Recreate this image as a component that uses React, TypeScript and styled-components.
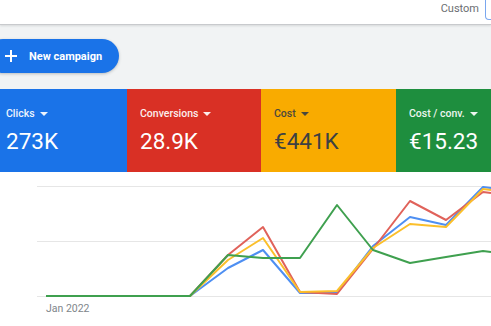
import React from 'react';
import styled, { createGlobalStyle } from 'styled-components';

const GlobalStyle = createGlobalStyle`
  html, body {
    margin: 0;
    padding: 0;
    background: #ffffff;
    overflow: hidden;
  }
  body {
    font-family: Roboto, 'Liberation Sans', Arial, sans-serif;
  }
`;

const Page = styled.div`
  width: 491px;
  height: 326px;
  overflow: hidden;
  display: flex;
  flex-direction: column;
  background: #ffffff;
`;

const TopBar = styled.header`
  height: 24px;
  flex: none;
  background: #ffffff;
  border-bottom: 1px solid #c8cacd;
  box-shadow: 0 1px 2px rgba(60, 64, 67, 0.15);
  display: flex;
  justify-content: flex-end;
  align-items: flex-start;
  gap: 6px;
  position: relative;
  z-index: 1;
`;

const RangeLabel = styled.span`
  font-size: 11px;
  color: #6b6e72;
  line-height: 16px;
  margin-top: 1px;
`;

const RangeBox = styled.div`
  width: 10px;
  height: 19px;
  margin-right: -6px;
  border: 1px solid #7aa7ef;
  border-top: none;
  border-radius: 0 0 0 4px;
  flex: none;
`;

const ActionArea = styled.div`
  height: 64px;
  flex: none;
  background: #f1f3f4;
  padding-top: 14px;
  box-sizing: border-box;
`;

const NewButton = styled.button`
  height: 34px;
  margin-left: -14px;
  padding: 0 17px 0 18px;
  border: none;
  border-radius: 17px;
  background: #1a73e8;
  color: #ffffff;
  font-family: inherit;
  font-size: 11px;
  font-weight: 700;
  display: flex;
  align-items: center;
  gap: 11px;
  box-shadow: 0 1px 3px rgba(60, 64, 67, 0.3);
  cursor: pointer;
`;

const CardRow = styled.div`
  display: flex;
  height: 83px;
  flex: none;
  margin-left: -7px;
`;

const Card = styled.div<{ $bg: string; $fg: string; $w?: number }>`
  width: ${({ $w }) => ($w ? `${$w}px` : 'auto')};
  flex: ${({ $w }) => ($w ? 'none' : '1')};
  background: ${({ $bg }) => $bg};
  color: ${({ $fg }) => $fg};
  padding: 17px 0 0 13px;
  box-sizing: border-box;
  display: flex;
  flex-direction: column;
  gap: 5px;
`;

const CardLabel = styled.div`
  font-size: 10.5px;
  font-weight: 500;
  line-height: 16px;
  display: flex;
  align-items: center;
  gap: 5px;
  opacity: 0.92;
`;

const Caret = styled.span`
  width: 0;
  height: 0;
  border-left: 4px solid transparent;
  border-right: 4px solid transparent;
  border-top: 4px solid currentColor;
`;

const CardValue = styled.div`
  font-size: 22.5px;
  line-height: 28px;
  font-weight: 400;
`;

const ChartArea = styled.div`
  flex: 1;
  background: #ffffff;
`;

const PlusIcon = () => (
  <svg width="14" height="14" viewBox="0 0 14 14">
    <path d="M7 1v12M1 7h12" stroke="#fff" strokeWidth="2" />
  </svg>
);

const xs = [46, 82, 119, 156, 190, 228, 263, 300, 337, 373, 410, 446, 483, 491];
const top = 173;

const series = [
  { color: '#4e8ff2', ys: [297, 297, 297, 297, 297, 269, 251, 294, 294, 247, 218, 226, 188, 189] },
  { color: '#e0625a', ys: [297, 297, 297, 297, 297, 256, 228, 293, 295, 250, 202, 221, 193, 194] },
  { color: '#fbbf2b', ys: [297, 297, 297, 297, 297, 261, 239, 293, 292, 249, 225, 228, 190, 191] },
  { color: '#3fa04f', ys: [297, 297, 297, 297, 297, 256, 259, 259, 206, 251, 264, 258, 252, 253] },
];

const pts = (ys: number[]) => xs.map((x, i) => `${x},${ys[i] - top}`).join(' ');

const Chart = () => (
  <svg width="491" height="153" viewBox="0 0 491 153">
    {[187, 242, 297].map((y) => (
      <line key={y} x1="37" x2="491" y1={y - top + 0.5} y2={y - top + 0.5} stroke="#e6e6e6" strokeWidth="1" />
    ))}
    {series.map((s) => (
      <polyline key={s.color} points={pts(s.ys)} fill="none" stroke={s.color} strokeWidth="2" strokeLinejoin="round" />
    ))}
    <text x="46" y={313 - top} fontSize="10.5" fill="#80868b" fontFamily="Roboto, sans-serif">
      Jan 2022
    </text>
  </svg>
);

export default function App() {
  return (
    <>
      <GlobalStyle />
      <Page>
        <TopBar>
          <RangeLabel>Custom</RangeLabel>
          <RangeBox />
        </TopBar>
        <ActionArea>
          <NewButton>
            <PlusIcon />
            New campaign
          </NewButton>
        </ActionArea>
        <CardRow>
          <Card $bg="#1a73e8" $fg="#ffffff" $w={134}>
            <CardLabel>Clicks <Caret /></CardLabel>
            <CardValue>273K</CardValue>
          </Card>
          <Card $bg="#d93025" $fg="#ffffff" $w={134}>
            <CardLabel>Conversions <Caret /></CardLabel>
            <CardValue>28.9K</CardValue>
          </Card>
          <Card $bg="#f9ab00" $fg="#3c4043" $w={135}>
            <CardLabel>Cost <Caret /></CardLabel>
            <CardValue>€441K</CardValue>
          </Card>
          <Card $bg="#1e8e3e" $fg="#ffffff">
            <CardLabel>Cost / conv. <Caret /></CardLabel>
            <CardValue>€15.23</CardValue>
          </Card>
        </CardRow>
        <ChartArea>
          <Chart />
        </ChartArea>
      </Page>
    </>
  );
}
